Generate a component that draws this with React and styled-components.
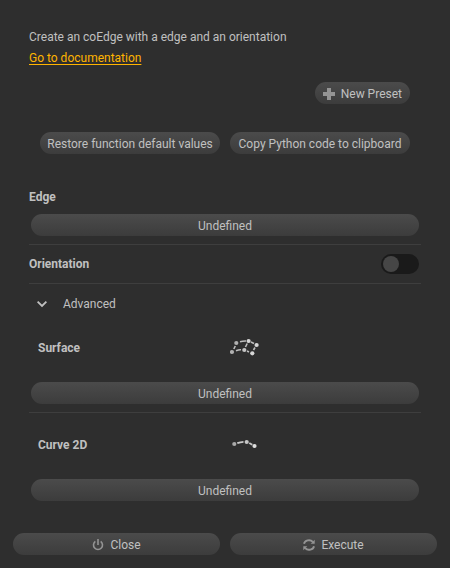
import { useState } from "react";
import styled, { createGlobalStyle } from "styled-components";

const GlobalStyle = createGlobalStyle`
  * {
    box-sizing: border-box;
  }

  body {
    margin: 0;
    background: #2e2e2e;
    color: #c0c0c0;
    font-family: Roboto, "Open Sans", sans-serif;
    font-size: 12px;
    line-height: 18px;
  }
`;

const Panel = styled.main`
  padding: 28px 13px 13px;
`;

const Body = styled.div`
  padding: 0 16px;
`;

const Intro = styled.p`
  margin: 0 0 3px;
`;

const DocLink = styled.a`
  display: block;
  width: fit-content;
  color: #ffb400;
  text-underline-offset: 2px;
`;

const Button = styled.button`
  display: flex;
  flex: ${({ $grow }) => ($grow ? "1 1 0" : "none")};
  align-items: center;
  justify-content: center;
  gap: 6px;
  min-width: 0;
  height: 22px;
  border: 0;
  border-radius: 11px;
  padding: 1px 8px 0;
  background: linear-gradient(#4b4b4b, #3c3c3c);
  color: inherit;
  font: inherit;
  white-space: nowrap;
  cursor: pointer;

  &:hover {
    background: linear-gradient(#555555, #454545);
  }
`;

const ButtonRow = styled.div`
  display: flex;
  justify-content: flex-end;
  gap: 10px;
  margin-top: ${({ $top }) => $top}px;
  padding: 0 11px;
`;

const Fields = styled.div`
  margin-top: 26px;
`;

const Field = styled.section`
  display: grid;
  gap: ${({ $gap }) => $gap}px;
  padding: 8px 0;

  & > ${Button} {
    margin: 0 2px;
  }
`;

const FieldName = styled.h2`
  margin: 0;
  font-size: 12px;
  line-height: 18px;
`;

const FieldHeader = styled.div`
  display: grid;
  grid-template-columns: 1fr 1fr;
  align-items: center;
  height: 48px;
  padding-left: 9px;
`;

const Divider = styled.hr`
  height: 1px;
  margin: 0;
  border: 0;
  background: #3e3e3e;
`;

const ToggleRow = styled.label`
  display: flex;
  align-items: center;
  justify-content: space-between;
  height: 38px;
  padding-right: 2px;
  font-weight: bold;
`;

const Toggle = styled.input`
  display: flex;
  align-items: center;
  width: 38px;
  height: 20px;
  margin: 0;
  border-radius: 10px;
  padding: 2px;
  appearance: none;
  background: #1a1a1a;
  cursor: pointer;

  &::before {
    width: 16px;
    height: 16px;
    border-radius: 50%;
    background: #464646;
    content: "";
  }

  &:checked {
    justify-content: flex-end;
  }

  &:checked::before {
    background: #ffb400;
  }
`;

const Disclosure = styled.button`
  display: flex;
  align-items: center;
  gap: 16px;
  width: 100%;
  height: 40px;
  border: 0;
  padding: 0 8px;
  background: none;
  color: inherit;
  font: inherit;
  cursor: pointer;
`;

const Chevron = styled.svg`
  transform: rotate(${({ $open }) => ($open ? 0 : -90)}deg);
`;

const Advanced = styled.div`
  & > ${Field}:first-child {
    padding-top: 0;
  }
`;

const Footer = styled.footer`
  display: flex;
  gap: 10px;
  margin-top: 24px;
`;

function PlusIcon() {
  return (
    <svg width="12" height="12" viewBox="0 0 12 12" aria-hidden="true">
      <path d="M4 0h4v4h4v4H8v4H4V8H0V4h4z" fill="#949494" />
    </svg>
  );
}

function PowerIcon() {
  return (
    <svg
      width="12"
      height="12"
      viewBox="0 0 12 12"
      fill="none"
      stroke="#949494"
      strokeWidth="1.6"
      aria-hidden="true"
    >
      <path d="M3.3 2.4a4.5 4.5 0 1 0 5.4 0M6 0v6" />
    </svg>
  );
}

function RefreshIcon() {
  return (
    <svg width="12" height="12" viewBox="0 0 12 12" aria-hidden="true">
      <g fill="none" stroke="#949494" strokeWidth="1.9">
        <path d="M1 4.800a5 4.200 0 0 1 8.800-2" />
        <path d="M11 7.200a5 4.200 0 0 1-8.800 2" />
      </g>
      <path d="M11.700.8v4H7.700zM.3 11.200v-4h4z" fill="#949494" />
    </svg>
  );
}

function SurfaceIcon() {
  return (
    <svg width="30" height="20" viewBox="0 0 30 20" aria-hidden="true">
      <g fill="none" stroke="#bdbdbd" strokeWidth="1.6">
        <path d="M10 3.700q3-.8 6-.7M21 4l3 1.500M3.800 11l1.500-3M6 12.800q3-1.200 5-1M15.500 9l1.700-3.500M17 13l2 1M23.500 12l1.500-2.500" />
      </g>
      <g fill="#b0b0b0">
        <circle cx="2" cy="14" r="2.100" />
        <circle cx="6.300" cy="5" r="2.100" />
      </g>
      <circle cx="14.300" cy="12" r="2.100" fill="#c6c6c6" />
      <g fill="#d6d6d6">
        <circle cx="18.600" cy="3" r="2.100" />
        <circle cx="26.600" cy="7" r="2.100" />
        <circle cx="22.300" cy="15.300" r="2.100" />
      </g>
    </svg>
  );
}

function CurveIcon() {
  return (
    <svg width="30" height="20" viewBox="0 0 30 20" aria-hidden="true">
      <path
        d="M7.300 8.200q3-1.200 6.200-1.400M19.300 8l3 1.800"
        fill="none"
        stroke="#c9c9c9"
        strokeWidth="1.8"
      />
      <circle cx="4.300" cy="9" r="2.100" fill="#a9a9a9" />
      <circle cx="16.700" cy="7" r="2.100" fill="#c6c6c6" />
      <circle cx="24.500" cy="11" r="2.100" fill="#dedede" />
    </svg>
  );
}

function AdvancedField({ name, icon }) {
  return (
    <Field $gap={10}>
      <FieldHeader>
        <FieldName>{name}</FieldName>
        {icon}
      </FieldHeader>
      <Button type="button">Undefined</Button>
    </Field>
  );
}

export default function App() {
  const [open, setOpen] = useState(true);

  return (
    <>
      <GlobalStyle />
      <Panel>
        <Body>
          <Intro>Create an coEdge with a edge and an orientation</Intro>
          <DocLink href="#documentation">Go to documentation</DocLink>
          <ButtonRow $top={15}>
            <Button type="button">
              <PlusIcon />
              New Preset
            </Button>
          </ButtonRow>
          <ButtonRow $top={28}>
            <Button type="button" $grow>
              Restore function default values
            </Button>
            <Button type="button" $grow>
              Copy Python code to clipboard
            </Button>
          </ButtonRow>
          <Fields>
            <Field $gap={8}>
              <FieldName>Edge</FieldName>
              <Button type="button">Undefined</Button>
            </Field>
            <Divider />
            <ToggleRow>
              Orientation
              <Toggle type="checkbox" role="switch" />
            </ToggleRow>
            <Divider />
            <Disclosure
              type="button"
              aria-expanded={open}
              onClick={() => setOpen(!open)}
            >
              <Chevron
                $open={open}
                width="10"
                height="10"
                viewBox="0 0 10 10"
                fill="none"
                stroke="#c0c0c0"
                strokeWidth="1.8"
                aria-hidden="true"
              >
                <path d="M.6 2.6L5 7l4.400-4.400" />
              </Chevron>
              Advanced
            </Disclosure>
            {open && (
              <Advanced>
                <AdvancedField name="Surface" icon={<SurfaceIcon />} />
                <Divider />
                <AdvancedField name="Curve 2D" icon={<CurveIcon />} />
              </Advanced>
            )}
          </Fields>
        </Body>
        <Footer>
          <Button type="button" $grow>
            <PowerIcon />
            Close
          </Button>
          <Button type="button" $grow>
            <RefreshIcon />
            Execute
          </Button>
        </Footer>
      </Panel>
    </>
  );
}
